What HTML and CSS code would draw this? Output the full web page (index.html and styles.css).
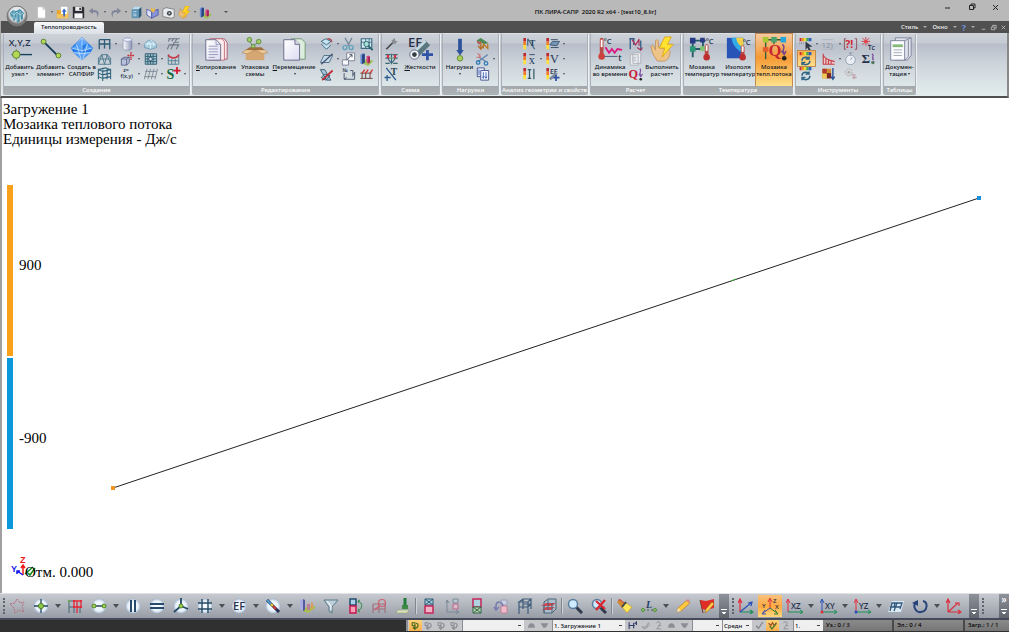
FILE: index.html
```
<!DOCTYPE html>
<html lang="ru">
<head>
    <meta charset="utf-8">
    <title>ПК ЛИРА-САПР 2020 R2 x64 - [test10_8.lir]</title>
    <meta name="viewport" content="width=device-width, initial-scale=1.0">
    <link rel="stylesheet" href="styles.css">
</head>
<body>
    <svg class="gradients" aria-hidden="true">
        <defs>
            <linearGradient id="g-box" x1="0" x2="1"><stop offset="0" stop-color="#fff"/><stop offset="1" stop-color="#8b93b5"/></linearGradient>
            <radialGradient id="g-orb"><stop offset="0" stop-color="#fff"/><stop offset=".7" stop-color="#e6f0fa"/><stop offset="1" stop-color="#a3b4c9"/></radialGradient>
            <radialGradient id="g-app" cy=".4"><stop offset="0" stop-color="#fff"/><stop offset=".7" stop-color="#dfe3e6"/><stop offset="1" stop-color="#777"/></radialGradient>
            <linearGradient id="g-page" x1="0" y1="0" x2="1" y2="1"><stop offset="0" stop-color="#fff"/><stop offset="1" stop-color="#dcdcf2"/></linearGradient>
        </defs>
    </svg>

    <!-- Icon sprite -->
    <svg class="sprite" aria-hidden="true">
        <symbol id="app" viewBox="0 0 22 22"><circle cx="11" cy="11" r="10" fill="url(#g-app)" stroke="#777"/><path d="M4 8l3-3 3 1 4-2 4 4-1 2v4l-2 1v-4l-1 5-3 2-1-6-1 4-2-1-1-4-1 2z" fill="#4b93ad"/><path d="M5 8l3 2 3-3 3 3 3-2M8 6v8M14 6v9M11 8v8" stroke="#c5e4ec" fill="none" stroke-width=".7"/></symbol>
        <symbol id="new" viewBox="0 0 16 16"><path d="M3 1h7l3 3v11H3z" fill="#fff" stroke="#bbb"/><path d="M10 1v3h3" fill="#ddd" stroke="#bbb"/></symbol>
        <symbol id="open" viewBox="0 0 16 16"><path d="M1 5h5l1 2h8v8H1z" fill="#e7a52e"/><path d="M6 1h8v9H6z" fill="#fff"/><path d="M10 3l3 4h-2v4H9V7H7z" fill="#3367c7"/><path d="M1 10h14v5H1z" fill="#f4c45c"/><path d="M9 8h2v5H9z" fill="#3367c7"/></symbol>
        <symbol id="save" viewBox="0 0 16 16"><path d="M1 1h13l1 1v13H1z" fill="#2b2b33"/><path d="M4 1h8v5H4z" fill="#eee"/><path d="M9 2h2v3H9z" fill="#333"/><path d="M3 9h10v6H3z" fill="#f4f4f4"/></symbol>
        <symbol id="undo" viewBox="0 0 16 16"><path d="M6 2L1 6l5 4V8c4-1 6 1 5 6 4-5 2-10-5-9z" fill="#828899"/></symbol>
        <symbol id="redo" viewBox="0 0 16 16"><path d="M10 2l5 4-5 4V8C6 7 4 9 5 14 1 9 3 4 10 5z" fill="#828899"/></symbol>
        <symbol id="cube" viewBox="0 0 16 16"><path d="M2 4l4-3h8l-3 3z" fill="#b9dcf0"/><path d="M2 4h9v11H2z" fill="#5f94b5"/><path d="M11 4l3-3v11l-3 3z" fill="#2e5675"/><path d="M4 7h4M4 10h4M4 12h4" stroke="#cfe6f2"/></symbol>
        <symbol id="book" viewBox="0 0 16 16"><path d="M1 4l6 3v8l-6-4z" fill="#dfe2fa" stroke="#4b57a0"/><path d="M15 4L7 7v8l8-4z" fill="#8b93d8" stroke="#4b57a0"/><path d="M6 2l3 2 2-2v4L9 8 6 6z" fill="#ecb944"/></symbol>
        <symbol id="camera" viewBox="0 0 16 16"><path d="M1 4l4-2 10 2v10l-4 1L1 13z" fill="#e9ecf0" stroke="#777"/><circle cx="9" cy="9" r="3" fill="#444"/><circle cx="9" cy="9" r="1.200" fill="#bcd"/></symbol>
        <symbol id="bolt" viewBox="0 0 16 16"><path d="M1 7l2-1v-3l2 3 6 4-1 4-5 1-4-4z" fill="#e8bd78" stroke="#b98345" stroke-width=".5"/><path d="M9 0L5 8h4l-3 7 9-9h-4l3-6z" fill="#ffd321" stroke="#d89b11" stroke-width=".6"/></symbol>
        <symbol id="blocks" viewBox="0 0 16 16"><path d="M1 12l7-4 8 2-6 6z" fill="#9cc155"/><path d="M1 3l3-2 2 1v10l-3 2-2-1z" fill="#6f8fd0"/><path d="M3 3l3-1v10l-3 2z" fill="#24407d"/><path d="M8 5l2-1 2 1v7l-2 1-2-1z" fill="#d9437c"/><path d="M10 6l2-1v7l-2 1z" fill="#9c2456"/></symbol>
        <symbol id="blocks-soft" viewBox="0 0 16 16"><path d="M1 12l7-3 8-1v2l-7 5z" fill="#a9bf4b"/><path d="M1 2l3-1v12l-3-1z" fill="#a9acdc"/><path d="M4 1l2 1v10l-2 1z" fill="#5559a0"/><path d="M8 6h3v6H8z" fill="#bb7f97"/><path d="M12 4l2 1v6h-2z" fill="#d89a60"/></symbol>

        <symbol id="node" viewBox="0 0 28 28"><path d="M5 20h22" stroke="#17405e" stroke-width="1.500"/><path d="M10 14v12" stroke="#799b43"/><circle cx="10" cy="20" r="4" fill="#b5d857" stroke="#577f31"/><text x="2" y="11" font-size="10" class="ico-txt">X,Y,Z</text></symbol>
        <symbol id="element" viewBox="0 0 28 28"><path d="M6 6l16 16" stroke="#183d56" stroke-width="2"/><circle cx="6" cy="6" r="2.600" fill="#b5d857" stroke="#577f31"/><circle cx="22" cy="21" r="2.600" fill="#b5d857" stroke="#577f31"/></symbol>
        <symbol id="sapfir" viewBox="0 0 28 28"><path d="M14 1l7 7 5 5-3 5-9 8-9-8-3-5 5-5z" fill="#2479e4"/><path d="M14 2L9 9l5 1 5-1zM9 9l-6 4 10 3 1-6zM19 9l6 4-10 3zM5 17l8 8v-8zM15 18v7l8-8z" fill="#55a1fb"/><path d="M14 2v24M3 13l11 3 11-3M5 18l9 1 9-1M14 2L8 9l5 16M14 2l6 7-5 16" stroke="#dff1ff" fill="none" stroke-width=".7"/></symbol>
        <symbol id="frame" viewBox="0 0 16 16"><path d="M2 3h12v10M2 3v11M8 3v10M2 8h12M14 13v1" stroke="#2c5b76" fill="none" stroke-width="1.500"/></symbol>
        <symbol id="truss" viewBox="0 0 16 16"><path d="M1 14V7l4-4h6l4 4v7zM1 14L5 3l3 11 3-11 4 11M1 8h14" stroke="#47758b" fill="none"/></symbol>
        <symbol id="frame3d" viewBox="0 0 16 16"><path d="M1 3l5 2 9-2M1 7l5 2 9-2M1 11l5 2 9-2M1 2v12M6 3v13M11 2v12M15 2v12M1 3l8-2 6 2" stroke="#2e637c" fill="none" stroke-width="1.200"/></symbol>
        <symbol id="cylinder" viewBox="0 0 16 16"><path d="M3 3v10c1 3 9 3 10 0V3z" fill="url(#g-box)" stroke="#727895" stroke-width=".6"/><ellipse cx="8" cy="3" rx="5" ry="2" fill="#e9edff" stroke="#7178a0" stroke-width=".6"/></symbol>
        <symbol id="box-move" viewBox="0 0 16 16"><path d="M1 8l3-2h6v6l-3 3H1z" fill="#b9c0dd" stroke="#586487"/><path d="M1 8h6v7M7 8l3-2" fill="none" stroke="#586487"/><path d="M12 0v9M8 4h8" stroke="#cc2531" stroke-width="1.500" stroke-dasharray="2 .7"/></symbol>
        <symbol id="fxy" viewBox="0 0 16 16"><text x="3" y="6" font-size="6" class="ico-txt">z=</text><text x="0" y="13" font-size="6" class="ico-txt">f(x,y)</text></symbol>
        <symbol id="dome" viewBox="0 0 16 16"><path d="M1 12C1 1 15 1 15 12l-7 2z" fill="#a8cddd" stroke="#6e9ab4"/><path d="M4 10C5 3 8 5 8 13M12 10C11 3 9 4 8 4M2 8h12" fill="none" stroke="#e5f7ff"/></symbol>
        <symbol id="mesh" viewBox="0 0 16 16"><path d="M2 2h13v12H2z" fill="#a0c4d2" stroke="#2c586d"/><path d="M2 5h13M2 8h13M2 11h13M5 2v12M8 2v12M11 2v12" stroke="#2c586d"/><circle cx="8" cy="8" r="2" fill="#dcecf4" stroke="#2c586d"/></symbol>
        <symbol id="grid-skew" viewBox="0 0 16 16"><path d="M4 2L1 14M8 2L5 14M12 2L9 14M16 2l-3 12M2 5h13M1 11h13" stroke="#7c8793" fill="none"/></symbol>
        <symbol id="ground" viewBox="0 0 16 16"><path d="M2 2h13M4 2L2 5M8 2L6 5M12 2l-2 3M3 9h11l-3 5M3 9l-2 5M9 6L5 14M14 6h-5" stroke="#6b7582" fill="none" stroke-width="1.200"/></symbol>
        <symbol id="membrane" viewBox="0 0 16 16"><path d="M2 3v11M14 3v11M2 14h12M2 10h12M6 8v6M10 8v6" stroke="#4b7b90" fill="none"/><path d="M2 3c2 5 10 5 12 0" stroke="#c63b48" fill="none" stroke-width="1.800"/></symbol>
        <symbol id="s-plus" viewBox="0 0 16 16"><text x="0" y="14" font-size="16" font-weight="700" font-family="Liberation Serif" fill="#11683a">S</text><path d="M12 0v8M8 4h8" stroke="#d41830" stroke-width="2"/></symbol>

        <symbol id="copy" viewBox="0 0 28 28"><path d="M10 3h13l3 4v18H10z" fill="#fbe6ea" stroke="#a35a6b"/><path d="M7 3h13l3 3v20H7z" fill="#fff0f0" stroke="#bb6878"/><path d="M3 4h11l5 5v17H3z" fill="url(#g-page)" stroke="#646786"/><path d="M14 4v5h5M6 11h10M6 14h10M6 17h10M6 20h10M6 23h7" stroke="#9295ba" fill="none"/></symbol>
        <symbol id="pack" viewBox="0 0 28 28"><path d="M4 15h20v11H4z" fill="#d5a773"/><path d="M4 15l4-3h13l3 3z" fill="#9d6f3c"/><path d="M4 15l-4 3 6 1 8-4zM24 15l4 3-6 1-8-4z" fill="#efcc9c" stroke="#aa7945" stroke-width=".6"/><path d="M8 5l3 5 8-3" stroke="#667e6e" fill="none"/><circle cx="8" cy="4" r="2.500" fill="#9fc96c" stroke="#62903f"/><circle cx="18" cy="6" r="2.500" fill="#9fc96c" stroke="#62903f"/><circle cx="12" cy="11" r="2" fill="#9fc96c" stroke="#62903f"/></symbol>
        <symbol id="move" viewBox="0 0 28 28"><path d="M11 3h11l4 4v18H11z" fill="#dceddd" stroke="#709374"/><path d="M3 4h12l5 5v17H3z" fill="url(#g-page)" stroke="#646786"/><path d="M15 4v5h5" fill="#dde" stroke="#646786"/></symbol>
        <symbol id="rotate" viewBox="0 0 16 16"><path d="M2 5l5-3 6 3-5 4zM2 8l6 6 5-5" fill="#c7e3ef" stroke="#335f7a"/><path d="M9 2c3 0 5 1 5 4" fill="none" stroke="#b04a55" stroke-width="1.500"/></symbol>
        <symbol id="plane" viewBox="0 0 16 16"><path d="M5 4h10l-4 8H1z" fill="#c5dbe9" stroke="#466c87"/><path d="M2 14L15 2" stroke="#44506b" stroke-width="1.400"/></symbol>
        <symbol id="mirror" viewBox="0 0 16 16"><path d="M1 3h5l7 12H8zM2 12l4-4 6 2-5 5z" fill="#a6c8db" stroke="#31536b"/><path d="M3 15L15 4" stroke="#be2930" stroke-width="2"/></symbol>
        <symbol id="cut" viewBox="0 0 16 16"><path d="M4 1l5 9M12 1L7 10" stroke="#71879a" stroke-width="1.400"/><circle cx="4" cy="12" r="2.300" fill="none" stroke="#55a1bb" stroke-width="1.400"/><circle cx="11" cy="12" r="2.300" fill="none" stroke="#55a1bb" stroke-width="1.400"/></symbol>
        <symbol id="scale" viewBox="0 0 16 16"><path d="M6 1h9v9H6z" fill="#fff" stroke="#737990"/><path d="M1 9h7v6H1z" fill="#f8f8ff" stroke="#737990"/><path d="M6 9l6-6M9 3h3v3" stroke="#333b55" fill="none"/></symbol>
        <symbol id="renumber" viewBox="0 0 16 16"><text x="1" y="6" font-size="6" class="ico-txt">№</text><path d="M3 7v7h12V6M3 14l3-2M15 6l-2 3M10 4h3v7" stroke="#3f4a63" fill="none"/></symbol>
        <symbol id="fragment" viewBox="0 0 16 16"><path d="M2 2h12v11H2z" fill="#d7eaf1" stroke="#3b6c81" stroke-width="1.300"/><path d="M2 6h12M7 2v11M11 2v11" stroke="#3b6c81"/><circle cx="8" cy="8" r="3" fill="#a7e1d8" stroke="#28626e"/><path d="M10 10l5 5" stroke="#28626e" stroke-width="2"/></symbol>
        <symbol id="loads-red" viewBox="0 0 16 16"><path d="M1 13h14M3 13V7M7 13V7M12 13V7M1 7h13" stroke="#62302b" fill="none"/><path d="M3 7l3-4M7 7l3-4M12 7l3-4" stroke="#d63530" stroke-width="1.600"/></symbol>

        <symbol id="wrench" viewBox="0 0 16 16"><path d="M2 14l8-8" stroke="#474b4e" stroke-width="2"/><path d="M9 7l-1-3 4-3v3l3 1-3 3z" fill="#8b8f94"/></symbol>
        <symbol id="hinge" viewBox="0 0 16 16"><path d="M1 3h6M9 3h6M1 7h5M10 7h5M1 13h5M10 13h5M8 2v12M4 8l4 5 4-5" stroke="#3b6675" fill="none" stroke-width="1.300"/><path d="M4 3v4M12 3v4" stroke="#cf3344" stroke-width="2.500"/><circle cx="8" cy="7" r="1.300" fill="#489967"/></symbol>
        <symbol id="axis-t" viewBox="0 0 16 16"><path d="M2 1l11 14M3 9v7M0 12h7" stroke="#285d91" stroke-width="1.500"/><text x="7" y="9" font-size="11" font-family="Liberation Serif" font-weight="700" fill="#27454e">T</text></symbol>
        <symbol id="stiff" viewBox="0 0 28 28"><text x="1" y="12" font-size="14" class="ico-txt">EF</text><path d="M9 20L22 7" stroke="#59777f" stroke-width="8"/><path d="M7 18L20 5" stroke="#c5d9df" stroke-width="3"/><circle cx="8" cy="20" r="5" fill="#eef5f7" stroke="#668"/><circle cx="8" cy="20" r="2.500" fill="#333c44"/><path d="M22 15v11M16 20h12" stroke="#2f54a7" stroke-width="3"/></symbol>
        <symbol id="load" viewBox="0 0 28 28"><path d="M14 3v14" stroke="#2d519a" stroke-width="4"/><path d="M10 15h8l-4 6z" fill="#2d519a"/><circle cx="14" cy="24" r="3" fill="#a7ce5b" stroke="#638a37"/></symbol>
        <symbol id="load-brush" viewBox="0 0 16 16"><path d="M1 4l5-3 9 6-5 1z" fill="#4c8856"/><path d="M6 5v8M3 10l3 4 3-4" stroke="#b56d29" stroke-width="1.500" fill="none"/><path d="M9 13V8l5 5V8" stroke="#bb7920" stroke-width="1.500" fill="none"/><path d="M2 5l3 3" stroke="#b34544" stroke-width="2"/></symbol>
        <symbol id="load-cut" viewBox="0 0 16 16"><path d="M3 11l11-8M12 11L4 6" stroke="#6b8baf" stroke-width="1.500"/><circle cx="3" cy="12" r="2" fill="none" stroke="#307db7" stroke-width="1.500"/><circle cx="12" cy="13" r="2" fill="none" stroke="#307db7" stroke-width="1.500"/><path d="M2 1l4 5M5 2v4H1" stroke="#ce6565" fill="none"/></symbol>
        <symbol id="load-copy" viewBox="0 0 16 16"><path d="M2 1h8v10H2z" fill="#e7eaff" stroke="#3c4d86"/><path d="M6 4h9v11H6z" fill="#f4f6ff" stroke="#3c4d86"/><path d="M4 3v6M9 6v6M12 6v6M8 11l1 2 1-2M11 11l1 2 1-2" stroke="#335cae" fill="none"/></symbol>
        <symbol id="fever" viewBox="0 0 4 16"><path d="M1 1h3v4H1z" fill="#bd2532"/><path d="M1 5h3v4H1z" fill="#f47a25"/><path d="M1 9h3v5H1z" fill="#ffe03a"/></symbol>
        <symbol id="an-t" viewBox="0 0 16 16"><use href="#fever" width="4" height="16"/><path d="M6 2l8 12M6 2v8" stroke="#446984" stroke-width="1.400"/><text x="8" y="10" font-size="10" font-family="Liberation Serif" font-weight="700" fill="#263e5e">T</text></symbol>
        <symbol id="an-x" viewBox="0 0 16 16"><use href="#fever" width="4" height="16"/><text x="7" y="14" font-size="14" font-family="Liberation Serif" fill="#264064">x</text><path d="M8 3h6" stroke="#264064"/></symbol>
        <symbol id="an-i" viewBox="0 0 16 16"><use href="#fever" width="4" height="16"/><path d="M8 3v10M6 3h4M6 13h4M13 2v12" stroke="#315a68" stroke-width="1.400"/></symbol>
        <symbol id="an-plate" viewBox="0 0 16 16"><use href="#fever" width="4" height="16"/><path d="M5 9l3-4h8l-3 5z" fill="#7594b6" stroke="#355572"/><path d="M6 12h9M6 3h8" stroke="#344962"/></symbol>
        <symbol id="an-v" viewBox="0 0 16 16"><use href="#fever" width="4" height="16"/><text x="5" y="13" font-size="14" font-family="Liberation Serif" fill="#263858">V</text></symbol>
        <symbol id="an-ef" viewBox="0 0 16 16"><use href="#fever" width="4" height="16"/><text x="5" y="8" font-size="8" class="ico-txt">EF</text><path d="M5 14l8-7" stroke="#7b899b" stroke-width="3"/><path d="M12 9v7M9 12h7" stroke="#3054a6" stroke-width="2"/></symbol>

        <symbol id="dynamic" viewBox="0 0 28 28"><path d="M5 4v16" stroke="#b94a45" stroke-width="4" stroke-linecap="round"/><path d="M5 4v8" stroke="#fff" stroke-width="2"/><circle cx="5" cy="22" r="3.500" fill="#cf3f3b"/><text x="7" y="9" font-size="8" class="ico-txt">°C</text><path d="M9 12l4 6 3-4 3 4 3-4 5 1" stroke="#da1782" fill="none" stroke-width="2"/><path d="M8 22h14" stroke="#435979"/><text x="23" y="27" font-size="9" class="ico-txt">t</text></symbol>
        <symbol id="hist" viewBox="0 0 16 16"><path d="M2 2v12M6 2v7M14 4v11M1 2h6" stroke="#345e86" fill="none" stroke-width="1.500"/><path d="M4 3l4 6 4-6M12 2v8M10 12l4 3 2-3" stroke="#b02a56" fill="none" stroke-width="1.300"/></symbol>
        <symbol id="doc-gray" viewBox="0 0 16 16"><path d="M5 1h9v12H5zM2 3h9v12H2z" fill="#ecedf0" stroke="#abafb8"/><path d="M4 6h5M4 8h5M4 10h5" stroke="#b7bac2"/></symbol>
        <symbol id="q" viewBox="0 0 16 16"><text x="0" y="12" font-size="14" font-weight="700" font-family="Liberation Serif" fill="#c81e38">Q</text><path d="M13 2c3 3-2 4 1 7M12 8l2 3 2-3" stroke="#7a4ba0" fill="none" stroke-width="1.300"/><circle cx="14" cy="14" r="1.500" fill="#222"/></symbol>
        <symbol id="run" viewBox="0 0 28 28"><path d="M2 11q2-2 3 0l2 4V5q2-2 3 0v7l11 3 2 2-2 7-4 3H9l-5-8z" fill="#edc387" stroke="#b98345" stroke-width=".7"/><path d="M17 1l-6 12h6l-3 10 12-14h-6l4-8z" fill="#ffe330" stroke="#e2a61b"/></symbol>
        <symbol id="mosaic" viewBox="0 0 28 28"><path d="M4 5h14M4 5v18M4 14h11V5" stroke="#27596b" stroke-width="2" fill="none"/><path d="M1 2h6v6H1zM12 2h5v5h-5z" fill="#293b87"/><path d="M1 11h6v6H1z" fill="#2c9775"/><path d="M12 11h5v5h-5z" fill="#80c86f"/><path d="M19 11v11" stroke="#b94a45" stroke-width="4" stroke-linecap="round"/><path d="M19 10v6" stroke="#fff" stroke-width="2"/><circle cx="19" cy="23" r="3.500" fill="#bd302f"/><text x="18" y="9" font-size="8" class="ico-txt">°C</text></symbol>
        <symbol id="iso" viewBox="0 0 28 28"><path d="M2 2h18v22H2z" fill="#2853b7"/><path d="M7 2h13v17C15 16 8 12 7 2z" fill="#33a9e5"/><path d="M12 2h8v10C16 11 13 8 12 2z" fill="#f4cf48"/><path d="M19 12v10" stroke="#b94a45" stroke-width="4" stroke-linecap="round"/><path d="M19 11v6" stroke="#fff" stroke-width="2"/><circle cx="19" cy="23" r="3.500" fill="#bd302f"/><text x="19" y="10" font-size="8" class="ico-txt">°C</text></symbol>
        <symbol id="flux" viewBox="0 0 28 28"><path d="M4 4h21M5 4v21M14 4v5" stroke="#375c37" stroke-width="1.500"/><path d="M2 1h6v6H2z" fill="#a8c833"/><path d="M11 1h6v6h-6z" fill="#4aa26f"/><path d="M21 1h6v6h-6z" fill="#25a7df"/><path d="M2 12h6v5H2z" fill="#e35c2d"/><text x="8" y="22" font-size="18" font-weight="700" font-family="Liberation Serif" fill="#ca2630">Q</text><path d="M23 9c5 4-2 6 2 9M22 16l3 4 2-4" stroke="#754789" fill="none" stroke-width="1.500"/><circle cx="25" cy="24" r="2.500" fill="#222"/></symbol>

        <symbol id="rainbow" viewBox="0 0 16 4" preserveAspectRatio="none"><path d="M0 0h3v4H0z" fill="#c92d38"/><path d="M3 0h3v4H3z" fill="#f29b24"/><path d="M6 0h3v4H6z" fill="#e8de36"/><path d="M9 0h3v4H9z" fill="#49a752"/><path d="M12 0h4v4h-4z" fill="#2861bb"/></symbol>
        <symbol id="pal-arrow" viewBox="0 0 16 16"><use href="#rainbow" x="1" y="1" width="14" height="4"/><path d="M8 5v10l2-3 2 4 2-1-2-4h4z" fill="#303744"/><path d="M1 7h5" stroke="#555" stroke-dasharray="1 1"/></symbol>
        <symbol id="pal-cycle" viewBox="0 0 16 16"><use href="#rainbow" x="1" y="0" width="14" height="4"/><path d="M4 10c0-5 7-5 8-2M12 5v3H8M13 10c0 5-7 6-9 2M4 15v-3h4" stroke="#2f6487" fill="none" stroke-width="1.700"/></symbol>
        <symbol id="num" viewBox="0 0 16 16"><text x="0" y="12" font-size="9" font-family="Open Sans" fill="#8a919e">12)</text><path d="M1 3h12M1 14h12" stroke="#adb4bd"/></symbol>
        <symbol id="decay" viewBox="0 0 16 16"><path d="M2 3c4 6 8 6 13 7v4H2z" fill="#efc8c8"/><path d="M2 2v12h13M2 4c4 6 8 5 13 7M5 7v7M8 9v5M11 10v4" stroke="#c3404a" fill="none" stroke-width="1.300"/></symbol>
        <symbol id="matrix" viewBox="0 0 16 16"><path d="M1 2h10v11H1z" fill="#d1892f"/><path d="M1 2h5v5H1z" fill="#af382f"/><path d="M6 7h5v6H6z" fill="#782627"/><path d="M1 8h5v5H1z" fill="#f0c853"/><path d="M13 1v11M11 11l2 3 2-3" stroke="#284f96" stroke-width="1.600" fill="none"/></symbol>
        <symbol id="query" viewBox="0 0 16 16"><path d="M3 2H1v12h2M13 2h2v12h-2" stroke="#8a4653" fill="none"/><text x="2" y="13" font-size="12" font-weight="700" font-family="Open Sans" fill="#d42535">?!</text></symbol>
        <symbol id="watch" viewBox="0 0 16 16"><circle cx="8" cy="9" r="5.500" fill="#e9eef4" stroke="#8f9dab"/><path d="M8 9l2-3M6 1h4M8 1v3" stroke="#8997a6" fill="none"/></symbol>
        <symbol id="gear-gray" viewBox="0 0 16 16"><circle cx="6" cy="6" r="4" fill="#d3d5d9" stroke="#aaa" stroke-dasharray="2 1"/><circle cx="6" cy="6" r="1.500" fill="#aaa"/><path d="M9 9h5M10 12h5M12 9v5" stroke="#c2a5ae" stroke-width="1.500"/></symbol>
        <symbol id="tc" viewBox="0 0 16 16"><path d="M5 0v10M0 5h10M1 1l8 8M9 1L1 9" stroke="#cb3842"/><circle cx="5" cy="5" r="2" fill="#e5434c"/><text x="7" y="15" font-size="8" class="ico-txt">Tc</text></symbol>
        <symbol id="sigma" viewBox="0 0 16 16"><text x="0" y="13" font-size="15" font-weight="700" font-family="Liberation Serif" fill="#263149">Σ</text><path d="M12 2c4 3-2 4 2 7" stroke="#7a4ba0" fill="none" stroke-width="1.500"/><circle cx="13" cy="12" r="2" fill="#576"/></symbol>
        <symbol id="report" viewBox="0 0 28 28"><path d="M9 2h17v19l-4 5H9z" fill="#e1e4ed" stroke="#7c839a"/><path d="M4 5h15v21H4z" fill="#fafcff" stroke="#7c839a"/><path d="M19 5l7-3M19 26l4-4V4" stroke="#7c839a" fill="none"/><path d="M6 9h11v3H6z" fill="#86b879"/><path d="M7 15h9M7 18h9M7 21h9" stroke="#a1a9af"/></symbol>

        <symbol id="star" viewBox="0 0 16 16"><path d="M1 6l5-1 2-4 3 4 4-1-2 5 2 5-5-2-4 3-1-5z" fill="none" stroke="#b56e7a" stroke-dasharray="2 1"/></symbol>
        <symbol id="orb" viewBox="0 0 16 16"><circle cx="8" cy="8" r="7.500" fill="url(#g-orb)"/></symbol>
        <symbol id="o-node" viewBox="0 0 16 16"><use href="#orb"/><path d="M8 1v14M1 8h14" stroke="#24465a" stroke-width="1.300"/><circle cx="8" cy="8" r="2.600" fill="#8fc948" stroke="#4f822a"/></symbol>
        <symbol id="nodes-red" viewBox="0 0 16 16"><path d="M2 3h5M2 3v12M2 9h5M7 9v6M13 9v6" stroke="#456575" fill="none"/><path d="M7 3h7v6H7zM10 3v12" fill="none" stroke="#e5283a" stroke-width="1.300"/><path d="M6 2h2v2H6zM13 2h2v2h-2zM6 8h2v2H6zM13 8h2v2h-2zM9 8h2v2H9z" fill="#e5283a"/><circle cx="2" cy="3" r="1.200" fill="#6aab4f"/></symbol>
        <symbol id="o-bar" viewBox="0 0 16 16"><use href="#orb"/><path d="M2 8h12" stroke="#26475f" stroke-width="1.500"/><circle cx="3" cy="8" r="2" fill="#a1d24f" stroke="#4f822a"/><circle cx="13" cy="8" r="2" fill="#a1d24f" stroke="#4f822a"/></symbol>
        <symbol id="o-vert" viewBox="0 0 16 16"><use href="#orb"/><path d="M6 2v12M10 2v12" stroke="#24496a" stroke-width="2"/></symbol>
        <symbol id="o-horz" viewBox="0 0 16 16"><use href="#orb"/><path d="M1 6h14M1 10h14" stroke="#24496a" stroke-width="2"/></symbol>
        <symbol id="o-diag" viewBox="0 0 16 16"><use href="#orb"/><path d="M8 0v8l7 3M8 8l-7 6" stroke="#244a64" stroke-width="1.800" fill="none"/><circle cx="8" cy="8" r="2" fill="#a1d24f" stroke="#4f822a"/></symbol>
        <symbol id="o-grid" viewBox="0 0 16 16"><use href="#orb"/><path d="M5 1v14M11 1v14M1 5h14M1 11h14" stroke="#244a64" stroke-width="1.400"/></symbol>
        <symbol id="o-ef" viewBox="0 0 16 16"><use href="#orb"/><text x="2" y="12" font-size="11" class="ico-txt">EF</text></symbol>
        <symbol id="o-line" viewBox="0 0 16 16"><use href="#orb"/><path d="M2 2l12 12" stroke="#222d50" stroke-width="3"/><path d="M2 2l4 4" stroke="#4a9bd0" stroke-width="2"/><path d="M6 6l2 2" stroke="#e8d239" stroke-width="2"/><path d="M8 8l3 3" stroke="#d33a39" stroke-width="2"/></symbol>
        <symbol id="funnel" viewBox="0 0 16 16"><path d="M1 2h14l-6 7v6l-3-2V9z" fill="#bed1da" stroke="#597986"/><path d="M4 3l4 5v4" stroke="#fff" fill="none"/></symbol>
        <symbol id="swap" viewBox="0 0 16 16"><path d="M3 1h6v6H3z" fill="#acd3e7" stroke="#234c6e" stroke-width="1.500"/><path d="M3 8h6v7H3z" fill="#f2a1b6" stroke="#c5174e" stroke-width="1.500"/><path d="M11 3c5 2 5 7 0 10M13 2l-2 1 1 2M12 11l-1 2 2 1" stroke="#328b48" fill="none"/></symbol>
        <symbol id="frame-pink" viewBox="0 0 16 16"><path d="M2 6h12v9M2 6v9M8 6v9M2 11h12" stroke="#a1707f" fill="none" stroke-width="1.200"/><circle cx="11" cy="5" r="3.500" fill="none" stroke="#d0606f" stroke-width="1.200"/><path d="M8 8l-4 4" stroke="#d0606f" stroke-width="1.600"/></symbol>
        <symbol id="brush" viewBox="0 0 16 16"><path d="M10 0v8" stroke="#217b39" stroke-width="3"/><path d="M7 7h6v4H7z" fill="#3b8b44"/><path d="M3 12h11l-2 3H1z" fill="#dae2bd" stroke="#899863" stroke-width=".5"/></symbol>
        <symbol id="frag-top" viewBox="0 0 16 16"><path d="M4 1h8v6H4zM4 1l8 6M12 1L4 7" fill="#9eccda" stroke="#305b75"/><path d="M4 8h8v7H4z" fill="#eeb5c7" stroke="#c62658" stroke-width="1.500"/></symbol>
        <symbol id="frag-axis" viewBox="0 0 16 16"><path d="M2 14V3M2 14h12M1 5l1-3 2 3M11 12l3 2-3 2" stroke="#7b8796" fill="none"/><path d="M8 1h5v4H8z" fill="#b8c6d1" stroke="#7a8c99"/><path d="M8 6h5v5H8z" fill="#d9bac7" stroke="#b9688a"/></symbol>
        <symbol id="frag-bot" viewBox="0 0 16 16"><path d="M4 1h8v8H4z" fill="#add3e0" stroke="#c4235a" stroke-width="1.500"/><path d="M4 9h8v6H4zM4 9l8 6M12 9l-8 6" fill="#b9d1af" stroke="#34694a"/></symbol>
        <symbol id="frag-undo" viewBox="0 0 16 16"><path d="M8 2h6v5H8z" fill="#cbd0e1" stroke="#9aa0b7"/><path d="M8 8h6v7H8z" fill="#edbcca" stroke="#c77e98"/><path d="M3 12V7c1-4 6-4 7 1M1 9l2 3 3-3" stroke="#777daf" fill="none" stroke-width="1.500"/></symbol>
        <symbol id="wire3d" viewBox="0 0 16 16"><path d="M2 4l4-3h8l-3 3zM2 4v12M6 1v10M11 4v12M14 1v10M2 9h9l3-3M6 6h8" stroke="#405d7b" fill="none" stroke-width="1.200"/></symbol>
        <symbol id="wire-red" viewBox="0 0 16 16"><path d="M3 4l4-3h8v10l-4 4H3z" fill="#a9bfcd" stroke="#4d6478"/><path d="M0 8l5-3h10l-4 3zM1 12l4-3h9l-4 3z" fill="#d24650"/><path d="M3 7v8M11 5v10M7 2v10" stroke="#4d6478"/></symbol>
        <symbol id="lens" viewBox="0 0 16 16"><path d="M9 9l6 6" stroke="#2f3949" stroke-width="3"/><circle cx="6" cy="6" r="4.500" fill="#cdeaff" stroke="#5b7d9d" stroke-width="1.500"/></symbol>
        <symbol id="lens-x" viewBox="0 0 16 16"><path d="M9 9l6 6" stroke="#2f3949" stroke-width="3"/><circle cx="6" cy="6" r="4.500" fill="#cdeaff" stroke="#5b7d9d" stroke-width="1.500"/><path d="M5 3l9 8M14 2L5 12" stroke="#dd2530" stroke-width="2.200"/></symbol>
        <symbol id="torch" viewBox="0 0 16 16"><path d="M1 2l2-1 6 5-4 4z" fill="#c93d35"/><path d="M0 4l3-2 6 5-4 3z" fill="#d2882f"/><path d="M5 9l4-4 6 4-5 6z" fill="#ffe759" stroke="#b8922b" stroke-width=".6"/><path d="M9 4l-4 5" stroke="#3b4649" stroke-width="2"/></symbol>
        <symbol id="length" viewBox="0 0 16 16"><path d="M2 12h12" stroke="#496052" stroke-dasharray="2 2"/><circle cx="2" cy="12" r="1.500" fill="#a5cd74" stroke="#4b8b39"/><circle cx="14" cy="12" r="1.500" fill="#a5cd74" stroke="#4b8b39"/><text x="5" y="10" font-size="10" font-style="italic" font-weight="700" font-family="Liberation Serif" fill="#253c65">L</text></symbol>
        <symbol id="pencil" viewBox="0 0 16 16"><path d="M2 14l1-4 9-8 3 3-9 8z" fill="#ffc93b" stroke="#b87829" stroke-width=".7"/><path d="M2 14l1-4 3 3z" fill="#f9e4bc"/><path d="M11 3l2-2 2 2-1 2z" fill="#d78a85"/></symbol>
        <symbol id="flag-pencil" viewBox="0 0 16 16"><path d="M1 2l6 1 8-2v9l-8 2-4-1z" fill="#e12d27"/><path d="M1 2l3 13" stroke="#883522"/><path d="M6 15l1-4 6-7 2 2-6 7z" fill="#ffd048" stroke="#a56923" stroke-width=".6"/></symbol>
        <symbol id="axes3" viewBox="0 0 16 16"><path d="M2 14V2M0 5l2-4 2 4" stroke="#e72b3c" fill="none" stroke-width="1.200"/><path d="M2 14h13M12 12l3 2-3 2" stroke="#189154" fill="none" stroke-width="1.200"/><path d="M2 14L13 5M10 5l4-1-1 4" stroke="#2750ba" fill="none" stroke-width="1.200"/></symbol>
        <symbol id="axes-iso" viewBox="0 0 20 20"><path d="M10 12V3M8 6l2-4 2 4" stroke="#d8343b" fill="none"/><path d="M10 12l7 5M15 14l3 4h-4" stroke="#2f7e39" fill="none"/><path d="M10 12l-7 5M5 14l-3 4h4" stroke="#364ab4" fill="none"/><text x="13" y="7" font-size="6" class="ico-txt">Z</text><text x="2" y="12" font-size="6" class="ico-txt">Y</text><text x="15" y="13" font-size="6" class="ico-txt">X</text></symbol>
        <symbol id="ax-xz" viewBox="0 0 20 16"><path d="M2 14V2M0 5l2-4 2 4" stroke="#e72b3c" fill="none"/><path d="M2 14h15M14 12l3 2-3 2" stroke="#189154" fill="none"/><text x="5" y="11" font-size="8" class="ico-txt">XZ</text></symbol>
        <symbol id="ax-xy" viewBox="0 0 20 16"><path d="M2 14V2M0 5l2-4 2 4" stroke="#2750ba" fill="none"/><path d="M2 14h15M14 12l3 2-3 2" stroke="#189154" fill="none"/><circle cx="2" cy="14" r="1.500" fill="#e72b3c"/><text x="5" y="11" font-size="8" class="ico-txt">XY</text></symbol>
        <symbol id="ax-yz" viewBox="0 0 20 16"><path d="M2 14V2M0 5l2-4 2 4" stroke="#e72b3c" fill="none"/><path d="M2 14h15M14 12l3 2-3 2" stroke="#189154" fill="none"/><circle cx="2" cy="14" r="1.500" fill="#2750ba"/><text x="5" y="11" font-size="8" class="ico-txt">YZ</text></symbol>
        <symbol id="persp" viewBox="0 0 16 16"><path d="M4 3h12l-3 11H0z" fill="#d9eaf5"/><path d="M2 13l2-8h10l-2 6M2 9h11M6 13l3-8M7 5L6 9" stroke="#31577b" fill="none" stroke-width="1.300"/></symbol>
        <symbol id="spin" viewBox="0 0 16 16"><path d="M4 4c-4 4 0 11 5 10 7-1 7-10 2-11" stroke="#27457a" fill="none" stroke-width="2"/><path d="M0 5l6-3v6z" fill="#27457a"/></symbol>
        <symbol id="axes-red" viewBox="0 0 16 16"><path d="M2 14V2M0 5l2-4 2 4M2 14h13M12 12l3 2-3 2M2 14L12 5M9 5h4v3" stroke="#db313f" fill="none" stroke-width="1.200"/></symbol>
        <symbol id="arc" viewBox="0 0 16 16"><path d="M2 3h5v5H2zM9 4c5 0 5 8-2 9M4 12l3-3v6z" stroke="currentColor" fill="none" stroke-width="2"/></symbol>
        <symbol id="up" viewBox="0 0 16 16"><path d="M2 12q0-8 6-8t6 8z" fill="currentColor"/></symbol>
        <symbol id="down" viewBox="0 0 16 16"><path d="M1 4h14l-5 8H6z" fill="currentColor"/></symbol>
        <symbol id="h-load" viewBox="0 0 16 16"><path d="M2 2v12M2 8h10M10 3v10M12 5l3-3v5" stroke="#343e6b" fill="none" stroke-width="2"/></symbol>
        <symbol id="loop" viewBox="0 0 16 16"><path d="M2 10c2 6 9 4 9-2 0-7 6-4 3 0-3 5-8 1-12 3" stroke="currentColor" fill="none" stroke-width="1.600"/></symbol>
        <symbol id="person" viewBox="0 0 16 16"><path d="M4 4c2-4 8-3 7 1L5 14h8M8 8h5" stroke="currentColor" fill="none" stroke-width="1.600"/></symbol>
        <symbol id="check" viewBox="0 0 16 16"><path d="M2 8l4 5 8-11" stroke="currentColor" fill="none" stroke-width="2.500"/></symbol>
        <symbol id="check2" viewBox="0 0 16 16"><path d="M1 4l4 4 3-5 3 5 4-5" stroke="#9d4b24" fill="none" stroke-width="2"/><path d="M3 9l4 5 8-10" stroke="#557a30" fill="none" stroke-width="2.500"/></symbol>
    </svg>

    <header class="titlebar">
        <button class="app-button" aria-label="Меню приложения"><svg><use href="#app"/></svg></button>
        <div class="quick-access">
            <button class="drop" aria-label="Новый"><svg><use href="#new"/></svg></button>
            <button aria-label="Открыть"><svg><use href="#open"/></svg></button>
            <button aria-label="Сохранить"><svg><use href="#save"/></svg></button>
            <button class="drop" aria-label="Отменить"><svg><use href="#undo"/></svg></button>
            <button class="drop" aria-label="Повторить"><svg><use href="#redo"/></svg></button>
            <button aria-label="Модель"><svg><use href="#cube"/></svg></button>
            <button aria-label="Книга отчетов"><svg><use href="#book"/></svg></button>
            <button aria-label="Снимок"><svg><use href="#camera"/></svg></button>
            <button class="drop" aria-label="Расчет"><svg><use href="#bolt"/></svg></button>
            <button class="drop more" aria-label="Визуализация"><svg><use href="#blocks"/></svg></button>
        </div>
        <h1 class="title">ПК ЛИРА-САПР&nbsp; 2020 R2 x64 - [test10_8.lir]</h1>
        <div class="window-controls">
            <button aria-label="Свернуть"><svg viewBox="0 0 8 8"><path d="M1 5h5" stroke="#222"/></svg></button>
            <button aria-label="Развернуть"><svg viewBox="0 0 8 8"><path d="M1.500 2.500h4v4h-4zM3 2V1h4v4H6" stroke="#222" fill="none"/></svg></button>
            <button aria-label="Закрыть"><svg viewBox="0 0 8 8"><path d="M1 2l5 5M6 2L1 7" stroke="#222" fill="none"/></svg></button>
        </div>
    </header>

    <nav class="tabs">
        <a class="tab" href="#ribbon">Теплопроводность</a>
        <div class="tab-menu">
            <button class="chev">Стиль</button>
            <button class="chev">Окно</button>
            <button class="chev help">?</button>
            <button aria-label="Свернуть окно"><svg viewBox="0 0 8 8"><path d="M2 6h4" stroke="#bbb"/></svg></button>
            <button aria-label="Восстановить окно"><svg viewBox="0 0 8 8"><path d="M1.500 3.500h4v3h-4zM3 3V1.500h4V5H6" stroke="#bbb" fill="none"/></svg></button>
            <button aria-label="Закрыть окно"><svg viewBox="0 0 8 8"><path d="M2 2l4 4M6 2L2 6" stroke="#bbb" fill="none"/></svg></button>
        </div>
    </nav>

    <div class="ribbon" id="ribbon">
        <section class="group">
            <div class="group-body">
                <button class="big"><svg><use href="#node"/></svg><span>Добавить<br><span class="caret">узел</span></span></button>
                <button class="big"><svg><use href="#element"/></svg><span>Добавить<br><span class="caret">элемент</span></span></button>
                <button class="big"><svg><use href="#sapfir"/></svg><span>Создать в<br>САПФИР</span></button>
                <div class="tools">
                    <button class="drop" aria-label="Рама"><svg><use href="#frame"/></svg></button>
                    <button aria-label="Ферма"><svg><use href="#truss"/></svg></button>
                    <button aria-label="Пространственная рама"><svg><use href="#frame3d"/></svg></button>
                    <button class="drop" aria-label="Цилиндр"><svg><use href="#cylinder"/></svg></button>
                    <button class="drop" aria-label="Перемещение образующей"><svg><use href="#box-move"/></svg></button>
                    <button class="drop" aria-label="Поверхность z=f(x,y)"><svg><use href="#fxy"/></svg></button>
                    <button aria-label="Купол"><svg><use href="#dome"/></svg></button>
                    <button class="drop" aria-label="Триангуляция"><svg><use href="#mesh"/></svg></button>
                    <button class="drop" aria-label="Сеть"><svg><use href="#grid-skew"/></svg></button>
                    <button aria-label="Грунт"><svg><use href="#ground"/></svg></button>
                    <button aria-label="Мембрана"><svg><use href="#membrane"/></svg></button>
                    <button class="drop" aria-label="Сборка"><svg><use href="#s-plus"/></svg></button>
                </div>
            </div>
            <h2>Создание</h2>
        </section>

        <section class="group">
            <div class="group-body edit">
                <button class="big wide"><svg><use href="#copy"/></svg><span><u>К</u>опирование<br><span class="caret"></span></span></button>
                <button class="big mid"><svg><use href="#pack"/></svg><span>Упаковка<br>схемы</span></button>
                <button class="big wide"><svg><use href="#move"/></svg><span><u>П</u>еремещение<br><span class="caret"></span></span></button>
                <div class="tools tools-edit">
                    <button class="drop" aria-label="Поворот"><svg><use href="#rotate"/></svg></button>
                    <button class="drop" aria-label="Плоскость"><svg><use href="#plane"/></svg></button>
                    <button aria-label="Симметрия"><svg><use href="#mirror"/></svg></button>
                    <button aria-label="Вырезать"><svg><use href="#cut"/></svg></button>
                    <button aria-label="Масштаб"><svg><use href="#scale"/></svg></button>
                    <button aria-label="Перенумерация"><svg><use href="#renumber"/></svg></button>
                    <button aria-label="Фрагмент"><svg><use href="#fragment"/></svg></button>
                    <button aria-label="Блоки"><svg><use href="#blocks"/></svg></button>
                    <button aria-label="Нагрузка на схему"><svg><use href="#loads-red"/></svg></button>
                </div>
            </div>
            <h2>Редактирование</h2>
        </section>

        <section class="group">
            <div class="group-body scheme">
                <div class="tools tools-narrow">
                    <button aria-label="Настройка"><svg><use href="#wrench"/></svg></button>
                    <button aria-label="Шарниры"><svg><use href="#hinge"/></svg></button>
                    <button aria-label="Оси"><svg><use href="#axis-t"/></svg></button>
                </div>
                <button class="big mid"><svg><use href="#stiff"/></svg><span><u>Ж</u>есткости</span></button>
            </div>
            <h2>Схема</h2>
        </section>

        <section class="group">
            <div class="group-body loads">
                <button class="big"><svg><use href="#load"/></svg><span>Нагрузки<br><span class="caret"></span></span></button>
                <div class="tools">
                    <button aria-label="Правка нагрузок"><svg><use href="#load-brush"/></svg></button>
                    <button class="drop" aria-label="Удаление нагрузок"><svg><use href="#load-cut"/></svg></button>
                    <button aria-label="Копирование нагрузок"><svg><use href="#load-copy"/></svg></button>
                </div>
            </div>
            <h2>Нагрузки</h2>
        </section>

        <section class="group analysis">
            <div class="group-body">
                <div class="tools">
                    <button aria-label="Тип элемента"><svg><use href="#an-t"/></svg></button>
                    <button class="drop" aria-label="Координаты"><svg><use href="#an-x"/></svg></button>
                    <button aria-label="Длина"><svg><use href="#an-i"/></svg></button>
                    <button class="drop" aria-label="Толщина"><svg><use href="#an-plate"/></svg></button>
                    <button class="drop" aria-label="Объем"><svg><use href="#an-v"/></svg></button>
                    <button class="drop" aria-label="Параметры жесткости"><svg><use href="#an-ef"/></svg></button>
                </div>
            </div>
            <h2>Анализ геометрии и свойств</h2>
        </section>

        <section class="group">
            <div class="group-body calc">
                <button class="big mid"><svg><use href="#dynamic"/></svg><span>Динамика<br>во времени</span></button>
                <div class="tools tools-tight">
                    <button aria-label="История"><svg><use href="#hist"/></svg></button>
                    <button aria-label="Документ"><svg><use href="#doc-gray"/></svg></button>
                    <button aria-label="Тепловой поток"><svg><use href="#q"/></svg></button>
                </div>
                <button class="big mid"><svg><use href="#run"/></svg><span>Выполнить<br><span class="caret">расчет</span></span></button>
            </div>
            <h2>Расчет</h2>
        </section>

        <section class="group">
            <div class="group-body">
                <button class="big mid"><svg><use href="#mosaic"/></svg><span>Мозаика<br>температур</span></button>
                <button class="big mid"><svg><use href="#iso"/></svg><span>Изополя<br>температур</span></button>
                <button class="big mid active" aria-pressed="true"><svg><use href="#flux"/></svg><span>Мозаика<br>тепл.потока</span></button>
            </div>
            <h2>Температура</h2>
        </section>

        <section class="group">
            <div class="group-body instruments">
                <div class="tools tools-inst">
                    <button class="drop" aria-label="Выбор по шкале"><svg><use href="#pal-arrow"/></svg></button>
                    <button class="active" aria-label="Обновить шкалу" aria-pressed="true"><svg><use href="#pal-cycle"/></svg></button>
                    <button aria-label="Сбросить шкалу"><svg><use href="#pal-cycle"/></svg></button>
                    <button class="drop" aria-label="Значения"><svg><use href="#num"/></svg></button>
                    <button class="drop" aria-label="График"><svg><use href="#decay"/></svg></button>
                    <button aria-label="Матрица"><svg><use href="#matrix"/></svg></button>
                    <button aria-label="Запрос"><svg><use href="#query"/></svg></button>
                    <button aria-label="Время"><svg><use href="#watch"/></svg></button>
                    <button aria-label="Параметры"><svg><use href="#gear-gray"/></svg></button>
                    <button aria-label="Температура Tc"><svg><use href="#tc"/></svg></button>
                    <button aria-label="Сумма"><svg><use href="#sigma"/></svg></button>
                </div>
            </div>
            <h2>Инструменты</h2>
        </section>

        <section class="group">
            <div class="group-body">
                <button class="big"><svg><use href="#report"/></svg><span>Докумен-<br><span class="caret">тация</span></span></button>
            </div>
            <h2>Таблицы</h2>
        </section>
    </div>

    <main class="viewport">
        <!-- Structural model -->
        <svg class="model" viewBox="0 0 1007 495" preserveAspectRatio="none">
            <path d="M111 390L977 100" stroke="#222" fill="none"/>
            <path d="M729 183l5-2" stroke="#3fae3f" fill="none"/>
            <path d="M109 388h4v4h-4z" fill="#f7941d"/>
            <path d="M975 98h4v4h-4z" fill="#1b8fdc"/>
        </svg>
        <p class="caption">Загружение 1<br>Мозаика теплового потока<br>Единицы измерения - Дж/с</p>
        <div class="legend">
            <div class="level hot"><span>900</span></div>
            <div class="level cold"><span>-900</span></div>
        </div>
        <div class="elevation">
            <svg viewBox="0 0 30 26"><path d="M14 20V11M12 13l2-3 2 3" stroke="#f01818" fill="none" stroke-width="1.500"/><path d="M14 20l-6-4M8 19v-3h3" stroke="#1717e8" fill="none" stroke-width="1.500"/><path d="M16 19l8-7M19 18l2 2 5-7" stroke="#138a1d" fill="none" stroke-width="1.500"/><text x="2" y="17" fill="#1717e8">Y</text><text x="11" y="8" fill="#f01818">Z</text></svg>
            <span>Отм. 0.000</span>
        </div>
    </main>

    <div class="toolbar">
        <div class="strip">
            <button aria-label="Полифильтр"><svg><use href="#star"/></svg></button>
            <button class="drop" aria-label="Отметка узлов"><svg><use href="#o-node"/></svg></button>
            <button aria-label="Отметка блока"><svg><use href="#nodes-red"/></svg></button>
            <button class="drop" aria-label="Отметка элементов"><svg><use href="#o-bar"/></svg></button>
            <button aria-label="Вертикальные стержни"><svg><use href="#o-vert"/></svg></button>
            <button aria-label="Горизонтальные стержни"><svg><use href="#o-horz"/></svg></button>
            <button aria-label="Отметка по направлению"><svg><use href="#o-diag"/></svg></button>
            <button class="drop" aria-label="Отметка сетки"><svg><use href="#o-grid"/></svg></button>
            <button class="drop" aria-label="Отметка по жесткости"><svg><use href="#o-ef"/></svg></button>
            <button class="drop" aria-label="Секущая"><svg><use href="#o-line"/></svg></button>
            <button aria-label="Отметка блоков"><svg><use href="#blocks-soft"/></svg></button>
            <button aria-label="Фильтр"><svg><use href="#funnel"/></svg></button>
            <button aria-label="Инверсия"><svg><use href="#swap"/></svg></button>
            <button aria-label="Поиск на схеме"><svg><use href="#frame-pink"/></svg></button>
            <button aria-label="Отмена отметки"><svg><use href="#brush"/></svg></button>
            <i class="sep"></i>
            <button aria-label="Фрагментация"><svg><use href="#frag-top"/></svg></button>
            <button aria-label="Фрагментация по осям"><svg><use href="#frag-axis"/></svg></button>
            <button aria-label="Инверсная фрагментация"><svg><use href="#frag-bot"/></svg></button>
            <button aria-label="Восстановить"><svg><use href="#frag-undo"/></svg></button>
            <button aria-label="Пространственная модель"><svg><use href="#wire3d"/></svg></button>
            <button aria-label="Отсечение"><svg><use href="#wire-red"/></svg></button>
            <i class="sep"></i>
            <button aria-label="Увеличить"><svg><use href="#lens"/></svg></button>
            <button aria-label="Исходный размер"><svg><use href="#lens-x"/></svg></button>
            <i class="sep"></i>
            <button aria-label="Информация"><svg><use href="#torch"/></svg></button>
            <button class="drop" aria-label="Размеры"><svg><use href="#length"/></svg></button>
            <button aria-label="Карандаш"><svg><use href="#pencil"/></svg></button>
            <button aria-label="Флаги рисования"><svg><use href="#flag-pencil"/></svg></button>
            <button class="overflow" aria-label="Еще кнопки"></button>
        </div>
        <div class="strip">
            <button aria-label="Изометрия"><svg><use href="#axes3"/></svg></button>
            <button class="active" aria-label="Диметрия" aria-pressed="true"><svg class="full"><use href="#axes-iso"/></svg></button>
            <button class="drop" aria-label="Проекция XZ"><svg class="full"><use href="#ax-xz"/></svg></button>
            <button class="drop" aria-label="Проекция XY"><svg class="full"><use href="#ax-xy"/></svg></button>
            <button class="drop" aria-label="Проекция YZ"><svg class="full"><use href="#ax-yz"/></svg></button>
            <button aria-label="Перспектива"><svg><use href="#persp"/></svg></button>
            <button class="drop" aria-label="Вращение"><svg><use href="#spin"/></svg></button>
            <button aria-label="Местные оси"><svg><use href="#axes-red"/></svg></button>
        </div>
        <div class="strip end">
            <button class="overflow" aria-label="Еще проекции"></button>
        </div>
        <div class="strip last">
            <button class="overflow" aria-label="Еще панели">»</button>
        </div>
    </div>

    <footer class="statusbar">
        <div class="mini first">
            <button class="active" aria-label="Дуга"><svg><use href="#arc"/></svg></button>
            <button aria-label="Режим 2"><svg><use href="#arc"/></svg></button>
            <button aria-label="Режим 3"><svg><use href="#arc"/></svg></button>
            <button aria-label="Режим 4"><svg><use href="#arc"/></svg></button>
        </div>
        <select class="s-filter" aria-label="Форма"><option></option></select>
        <div class="mini">
            <button aria-label="Предыдущее"><svg><use href="#up"/></svg></button>
            <button aria-label="Следующее"><svg><use href="#down"/></svg></button>
        </div>
        <select class="s-load" aria-label="Загружение"><option>1. Загружение 1</option></select>
        <div class="mini">
            <button aria-label="Загрузка"><svg><use href="#h-load"/></svg></button>
            <button aria-label="Петля"><svg><use href="#loop"/></svg></button>
            <button aria-label="Форма колебаний"><svg><use href="#person"/></svg></button>
            <button aria-label="Выше"><svg><use href="#up"/></svg></button>
            <button aria-label="Ниже"><svg><use href="#down"/></svg></button>
        </div>
        <select class="s-small" aria-label="Номер"><option></option></select>
        <select class="s-small" aria-label="Слой"><option>Средн</option></select>
        <div class="mini checks">
            <button aria-label="Применить"><svg><use href="#check"/></svg></button>
            <button class="active" aria-label="Автоприменение"><svg><use href="#check2"/></svg></button>
            <button aria-label="Сечение"><svg><use href="#person"/></svg></button>
        </div>
        <select class="s-small" aria-label="Вариант"><option>1.</option></select>
        <output class="cell">Уз.: 0 / 3</output>
        <output class="cell">Эл.: 0 / 4</output>
        <output class="cell short">Загр.: 1 / 1</output>
    </footer>
</body>
</html>
```

FILE: styles.css
```
* {
    box-sizing: border-box;
}
body {
    margin: 0;
    height: 100vh;
    display: flex;
    flex-direction: column;
    overflow: hidden;
    font-family: "Noto Sans", sans-serif;
    font-size: 6px;
    font-weight: 500;
    color: #10141c;
    background-color: #b9b9b9;
}
button {
    display: flex;
    align-items: center;
    padding: 0;
    border: 0;
    background: none;
    font: inherit;
    color: inherit;
    cursor: pointer;
}
svg {
    display: block;
    flex: none;
}
h1, h2, p {
    margin: 0;
    font-size: 6px;
    font-weight: 500;
}
.gradients {
    position: absolute;
    width: 0;
    height: 0;
}
.sprite {
    display: none;
}
.ico-txt {
    font-family: "Open Sans", sans-serif;
    font-weight: 600;
    fill: #26334f;
}

/* Title bar */
.titlebar {
    position: relative;
    display: flex;
    align-items: center;
    height: 21px;
    flex: none;
    padding-top: 3px;
    background-color: #b9b9b9;
}
.app-button {
    position: absolute;
    left: 6px;
    top: 5px;
    z-index: 2;
}
.app-button svg {
    width: 22px;
    height: 22px;
}
.quick-access {
    display: flex;
    padding-left: 35px;
}
.quick-access button {
    width: 16px;
}
.quick-access .drop {
    width: 21px;
}
.quick-access svg {
    width: 13px;
    height: 13px;
}
.drop::after {
    content: "";
    margin-left: 2px;
    border: 2px solid transparent;
    border-top-color: #4a4f58;
    border-bottom: 0;
}
.quick-access .drop::after {
    margin-left: 3px;
    border-width: 1px;
    border-top-width: 2px;
}
.quick-access .more {
    width: 30px;
}
.quick-access .more::after {
    margin-left: 12px;
    border-width: 2px;
    border-bottom-width: 0;
}
.title {
    flex: 1;
    padding-left: 18px;
    text-align: center;
    color: #000;
}
.window-controls {
    display: flex;
    align-self: flex-start;
    gap: 16px;
    padding-right: 9px;
}
.window-controls svg {
    width: 8px;
    height: 8px;
}

/* Tabs */
.tabs {
    display: flex;
    justify-content: space-between;
    height: 12px;
    flex: none;
    padding-left: 33px;
    background-color: #505050;
    border-left: 1px solid #a8a8a8;
}
.tab {
    margin-top: 1px;
    padding: 0 7px;
    border-radius: 2px 2px 0 0;
    background: linear-gradient(#f7f9fa, #dde2e8);
    color: #10141c;
    line-height: 11px;
    text-decoration: none;
}
.tab-menu {
    display: flex;
    align-items: center;
    gap: 3px;
    padding-right: 2px;
    color: #f0f0f0;
}
.tab-menu svg {
    width: 7px;
    height: 7px;
}
.chev::after {
    content: "";
    margin: 0 2px 0 5px;
    border: 2px solid transparent;
    border-top-color: #aaa;
    border-bottom: 0;
}
.help {
    color: #6f8fd8;
    font-size: 9px;
    font-weight: 700;
}

/* Ribbon */
.ribbon {
    display: flex;
    gap: 2px;
    flex: none;
    height: 65px;
    padding: 0 2px 1px;
    background: linear-gradient(#ced3da, #c6cbd3 10px, #b8bec9 11px, #ccd3da 30px, #e4eeed);
    border-left: 1px solid #a8a8a8;
    border-right: 2px solid #888;
    border-bottom: 2px solid #505050;
}
.group {
    display: flex;
    flex-direction: column;
    border: 1px solid #aab0b8;
    border-top-color: #dde1e6;
    border-radius: 2px;
    box-shadow: 1px 0 0 #eef1f3;
}
.group h2 {
    height: 8px;
    line-height: 8px;
    text-align: center;
    color: #fff;
    background: linear-gradient(#a3a8ac, #aeb3b5);
    white-space: nowrap;
}
.group-body {
    display: flex;
    flex: 1;
    justify-content: center;
}
.big {
    flex-direction: column;
    width: 31px;
    line-height: 7px;
    text-align: center;
    white-space: nowrap;
    padding-top: 2px;
}
.big.mid {
    width: 36px;
}
.big.wide {
    width: 42px;
}
.big svg {
    width: 26px;
    height: 26px;
    margin-bottom: 2px;
}
.big.active {
    background: linear-gradient(#f5c9a0, #f59a35 45%, #ffe08a);
    box-shadow: 0 0 0 1px #c08a50;
}
.caret::after {
    content: "";
    display: inline-block;
    margin-left: 1px;
    vertical-align: 1px;
    border: 1px solid transparent;
    border-top: 2px solid #333;
    border-bottom: 0;
}
.tools {
    display: grid;
    grid-template-rows: repeat(3, 15px);
    grid-auto-flow: column;
    grid-auto-columns: 23px;
    align-content: start;
    padding-top: 2px;
}
.tools svg {
    width: 15px;
    height: 14px;
}
.tools .drop::after {
    margin-left: 3px;
    border-width: 1px;
    border-top-width: 2px;
}
.tools .active {
    width: 17px;
    background: linear-gradient(#f9b458, #ffdf8c);
    box-shadow: 0 0 0 1px #c08a50;
}
.edit {
    padding: 0 1px 0 2px;
}
.tools-edit {
    margin-left: 4px;
    grid-template-columns: 22px 18px 18px;
}
.scheme {
    padding: 0 1px 0 2px;
}
.tools-narrow {
    grid-auto-columns: 18px;
}
.tools-tight {
    grid-auto-columns: 16px;
}
.loads {
    padding-left: 1px;
}
.analysis {
    min-width: 85px;
}
.calc {
    padding-left: 1px;
}
.instruments {
    padding: 0 2px;
}
.tools-inst {
    grid-template-columns: 23px 22px 18px 17px;
}

/* Model view */
.viewport {
    position: relative;
    flex: 1;
    min-height: 0;
    background-color: #fff;
    border-left: 2px solid #a0a0a0;
    font-family: "Liberation Serif", serif;
    font-size: 15px;
    font-weight: 400;
    color: #000;
}
.model {
    position: absolute;
    inset: 0;
    width: 100%;
    height: 100%;
}
.caption {
    padding: 4px 1px;
    font-size: 15px;
    font-weight: 400;
    line-height: 15px;
}
.legend {
    position: absolute;
    left: 5px;
    top: 87px;
    bottom: 64px;
    display: flex;
    flex-direction: column;
    gap: 2px;
}
.level {
    display: flex;
    align-items: center;
    flex: 1;
    padding: 0 0 10px 6px;
    border-left: 6px solid;
}
.level span {
    color: #000;
}
.hot {
    border-color: #f9a11b;
}
.cold {
    border-color: #0a97dc;
}
.elevation {
    position: absolute;
    left: 7px;
    bottom: 12px;
    display: flex;
    align-items: flex-end;
}
.elevation svg {
    width: 30px;
    height: 26px;
    margin-right: -14px;
    font-family: "Liberation Sans", sans-serif;
    font-size: 9px;
    font-weight: 700;
}

/* Bottom toolbars */
.toolbar {
    display: flex;
    flex: none;
    height: 27px;
    background-color: #a5a9b1;
    border-top: 1px solid #dfe1e4;
    border-bottom: 2px solid #444a57;
}
.strip {
    display: flex;
    align-items: center;
    padding-left: 5px;
    background: linear-gradient(#c6c9cf, #b0b4bc 50%, #979ca6);
}
.strip::before {
    content: "";
    align-self: stretch;
    margin: 4px 0 4px -2px;
    border-left: 2px dotted #5f646e;
}
.strip button {
    justify-content: center;
    width: 24px;
    height: 22px;
}
.strip svg {
    width: 16px;
    height: 16px;
}
.strip .full {
    width: 20px;
}
.strip .active .full {
    height: 20px;
}
.strip .drop {
    width: 34px;
    justify-content: flex-start;
    padding-left: 4px;
}
.strip .drop::after {
    margin-left: 6px;
    border-width: 3px;
    border-top-width: 4px;
    border-bottom-width: 0;
}
.strip .drop .full {
    margin-right: -4px;
}
.strip .active {
    background: linear-gradient(#f9c27d, #ffa940 50%, #ffd77c);
}
.strip .overflow {
    flex-direction: column;
    justify-content: flex-end;
    align-self: stretch;
    width: 10px;
    height: auto;
    padding-bottom: 2px;
    background: linear-gradient(#8d929b, #5f646d);
    color: #fff;
}
.overflow::after {
    content: "";
    width: 6px;
    height: 6px;
    border-top: 1px solid #fff;
    background: linear-gradient(#fff, #fff) center 2px / 4px 1px no-repeat, linear-gradient(#fff, #fff) center 3px / 2px 1px no-repeat;
}
.sep {
    width: 2px;
    height: 16px;
    border-left: 1px solid #80858e;
    border-right: 1px solid #cfd2d6;
}
.end {
    padding-left: 3px;
}
.end::before {
    display: none;
}
.last {
    flex: 1;
    justify-content: space-between;
}
.last .overflow {
    justify-content: space-between;
    font-size: 10px;
    line-height: 10px;
}

/* Status bar */
.statusbar {
    display: flex;
    align-items: stretch;
    justify-content: flex-end;
    flex: none;
    height: 12px;
    padding-bottom: 1px;
    background-color: #303030;
}
.mini {
    display: flex;
    align-items: center;
    padding: 0 1px;
    background-color: #c5c6c9;
    color: #8b8e94;
}
.mini button {
    width: 13px;
    height: 11px;
    justify-content: center;
}
.mini svg {
    width: 9px;
    height: 9px;
}
.mini .active {
    background: linear-gradient(#ffd27a, #f9b04a);
    color: #4b6b1f;
}
.first {
    border-left: 2px solid #8b8e94;
}
select {
    appearance: none;
    border: 0;
    border-left: 1px solid #8b8e94;
    border-radius: 0;
    padding: 0 7px 0 1px;
    background: #efefef linear-gradient(#444, #444) right 3px center / 3px 1px no-repeat;
    font: inherit;
    color: #10141c;
}
.s-filter {
    width: 62px;
}
.s-load {
    width: 73px;
}
.s-small {
    width: 30px;
}
.cell {
    flex: 0 0 71px;
    padding-left: 3px;
    line-height: 11px;
    background: linear-gradient(#8b8b8b, #757575);
    border-right: 2px solid #4a4a4a;
    color: #000;
}
.cell.short {
    flex-basis: 44px;
    border-right: 0;
}
```
